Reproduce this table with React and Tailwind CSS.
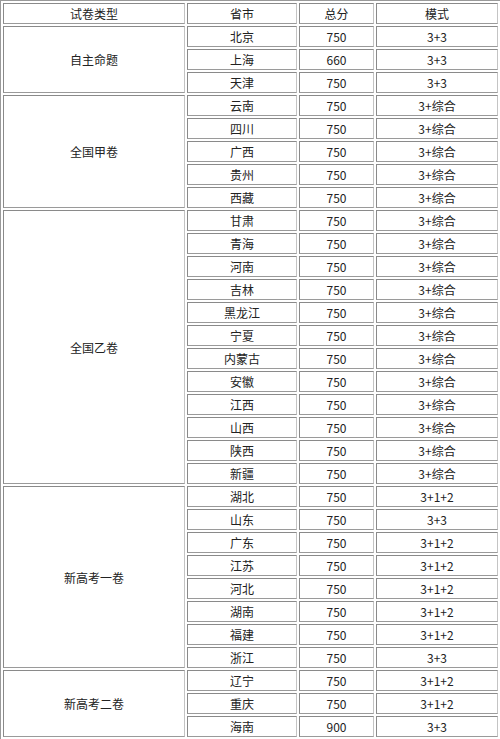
import React from "react";

const groups = [
  { name: "自主命题", rows: [["北京", "750", "3+3"], ["上海", "660", "3+3"], ["天津", "750", "3+3"]] },
  { name: "全国甲卷", rows: [["云南", "750", "3+综合"], ["四川", "750", "3+综合"], ["广西", "750", "3+综合"], ["贵州", "750", "3+综合"], ["西藏", "750", "3+综合"]] },
  { name: "全国乙卷", rows: [["甘肃", "750", "3+综合"], ["青海", "750", "3+综合"], ["河南", "750", "3+综合"], ["吉林", "750", "3+综合"], ["黑龙江", "750", "3+综合"], ["宁夏", "750", "3+综合"], ["内蒙古", "750", "3+综合"], ["安徽", "750", "3+综合"], ["江西", "750", "3+综合"], ["山西", "750", "3+综合"], ["陕西", "750", "3+综合"], ["新疆", "750", "3+综合"]] },
  { name: "新高考一卷", rows: [["湖北", "750", "3+1+2"], ["山东", "750", "3+3"], ["广东", "750", "3+1+2"], ["江苏", "750", "3+1+2"], ["河北", "750", "3+1+2"], ["湖南", "750", "3+1+2"], ["福建", "750", "3+1+2"], ["浙江", "750", "3+3"]] },
  { name: "新高考二卷", rows: [["辽宁", "750", "3+1+2"], ["重庆", "750", "3+1+2"], ["海南", "900", "3+3"]] },
];

const cell =
  "border border-t-[#8a8a8a] border-l-[#8a8a8a] border-r-[#c4c4c4] border-b-[#9a9a9a] text-center align-middle p-0 h-[21px] leading-[19px]";

export default function App() {
  return (
    <div className="w-[500px] h-[739px] bg-white overflow-hidden" style={{ fontFamily: '"Noto Sans CJK SC", "Noto Sans", sans-serif' }}>
      <table className="table-fixed w-[500px] border-separate border-spacing-[2px] border border-l-[#9a9a9a] border-t-[#9a9a9a] border-r-[#d4d4d4] border-r-2 border-b-[#d4d4d4] text-[12px] text-[#222]">
        <colgroup>
          <col className="w-[182px]" />
          <col className="w-[110px]" />
          <col className="w-[75px]" />
          <col className="w-[122px]" />
        </colgroup>
        <tbody>
          <tr>
            <td className={cell}>试卷类型</td>
            <td className={cell}>省市</td>
            <td className={cell}>总分</td>
            <td className={cell}>模式</td>
          </tr>
          {groups.map((g) =>
            g.rows.map((r, i) => (
              <tr key={g.name + r[0]}>
                {i === 0 && (
                  <td className={cell} rowSpan={g.rows.length}>
                    {g.name}
                  </td>
                )}
                <td className={cell}>{r[0]}</td>
                <td className={cell}>{r[1]}</td>
                <td className={cell}>{r[2]}</td>
              </tr>
            ))
          )}
        </tbody>
      </table>
    </div>
  );
}
